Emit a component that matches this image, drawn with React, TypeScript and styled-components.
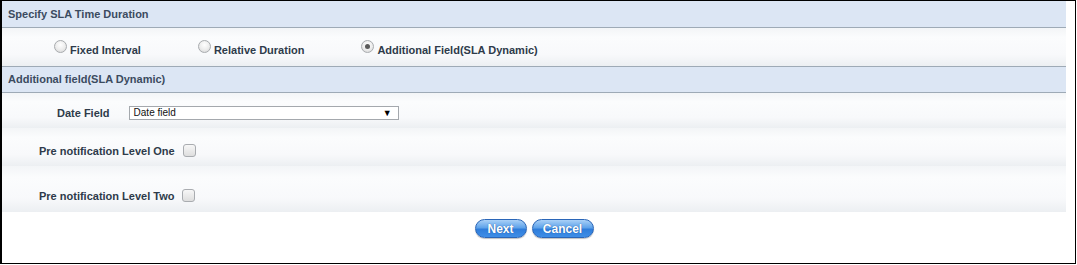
import * as React from 'react';
import styled, {createGlobalStyle} from "styled-components";

const GlobalStyle = createGlobalStyle`
	html, body {
		margin: 0;
		padding: 0;
		background: #fff;
	}
	body {
		font-family: "Liberation Sans", Arial, sans-serif;
		font-size: 11px;
	}
`;

const Frame = styled.div`
	box-sizing: border-box;
	width: 1076px;
	height: 264px;
	border: 1px solid #000;
	border-left-width: 2px;
	background: #fff;
`;

const Panel = styled.div`
	width: 1064px;
	display: flex;
	flex-direction: column;
`;

const SectionHeader = styled.div<{ $topLine?: boolean }>`
	box-sizing: border-box;
	height: 27px;
	background: #dce6f4;
	border-top: ${p => p.$topLine ? '1px solid #9eaab6' : 'none'};
	border-bottom: 1px solid #9eaab6;
	padding: ${p => p.$topLine ? '6px 0 0 6px' : '7px 0 0 6px'};
	color: #3b4b5f;
	font-weight: bold;
	font-size: 11px;
`;

const Row = styled.div<{ $height: number; $indent: number; $shift: number }>`
	box-sizing: border-box;
	height: ${p => p.$height}px;
	padding-left: ${p => p.$indent}px;
	padding-top: ${p => p.$shift}px;
	display: flex;
	align-items: center;
	background: linear-gradient(to bottom, #f3f5f7 0%, #fbfcfd 25%, #f8f9fb 70%, #eceff2 100%);
	color: #2e3b4a;
	font-weight: bold;
	font-size: 11px;
`;

const RadioGroup = styled.div`
	display: flex;
	gap: 57px;
`;

const RadioItem = styled.label`
	display: flex;
	align-items: center;
	gap: 3px;
`;

const RadioDot = styled.span<{ $checked?: boolean }>`
	position: relative;
	box-sizing: border-box;
	width: 13px;
	height: 13px;
	margin-top: -7px;
	border-radius: 50%;
	border: 1px solid #a8abae;
	background: radial-gradient(circle at 50% 35%, #ffffff 0%, #ececec 55%, #d2d2d2 100%);

	&::after {
		content: "";
		display: ${p => p.$checked ? 'block' : 'none'};
		position: absolute;
		left: 3px;
		top: 3px;
		width: 5px;
		height: 5px;
		border-radius: 50%;
		background: #5a5a5a;
	}
`;

const FieldLabel = styled.span`
	margin-right: 19px;
`;

const SelectBox = styled.div`
	box-sizing: border-box;
	width: 270px;
	height: 14px;
	border: 1px solid #a4a8ad;
	background: #fff;
	display: flex;
	align-items: center;
	justify-content: space-between;
	padding: 0 6px 0 4px;
	font-weight: normal;
	font-size: 10px;
	color: #111;
`;

const Arrow = styled.span`
	font-size: 9px;
	color: #000;
`;

const CheckBox = styled.span`
	box-sizing: border-box;
	width: 13px;
	height: 13px;
	margin-left: 8px;
	border: 1px solid #a9acb0;
	border-radius: 3px;
	background: linear-gradient(to bottom, #f7f7f7, #dedede);
`;

const ButtonBar = styled.div`
	display: flex;
	justify-content: center;
	gap: 5px;
	padding-top: 7px;
`;

const PillButton = styled.button<{ $width: number }>`
	box-sizing: border-box;
	width: ${p => p.$width}px;
	height: 19px;
	padding: 0;
	border: 1px solid #2a66b8;
	border-radius: 10px;
	background: linear-gradient(to bottom, #a9d0f7 0%, #5fa3ea 45%, #2f7ddb 55%, #3f8ee6 100%);
	color: #fff;
	font-family: "Liberation Sans", Arial, sans-serif;
	font-weight: bold;
	font-size: 12px;
	line-height: 16px;
	text-shadow: 0 0 1px #1d4f94;
	box-shadow: 0 1px 1px rgba(0,0,0,0.25);
`;

export default function App() {
	return (
		<Frame>
			<GlobalStyle/>
			<Panel>
				<SectionHeader>Specify SLA Time Duration</SectionHeader>
				<Row $height={38} $indent={52} $shift={5}>
					<RadioGroup>
						<RadioItem><RadioDot/>Fixed Interval</RadioItem>
						<RadioItem><RadioDot/>Relative Duration</RadioItem>
						<RadioItem><RadioDot $checked/>Additional Field(SLA Dynamic)</RadioItem>
					</RadioGroup>
				</Row>
				<SectionHeader $topLine>Additional field(SLA Dynamic)</SectionHeader>
				<Row $height={35} $indent={55} $shift={4}>
					<FieldLabel>Date Field</FieldLabel>
					<SelectBox>Date field<Arrow>▼</Arrow></SelectBox>
				</Row>
				<Row $height={38} $indent={37} $shift={7}>
					Pre notification Level One<CheckBox/>
				</Row>
				<Row $height={46} $indent={37} $shift={13}>
					Pre notification Level Two<CheckBox/>
				</Row>
				<ButtonBar>
					<PillButton $width={52}>Next</PillButton>
					<PillButton $width={62}>Cancel</PillButton>
				</ButtonBar>
			</Panel>
		</Frame>
	);
}
